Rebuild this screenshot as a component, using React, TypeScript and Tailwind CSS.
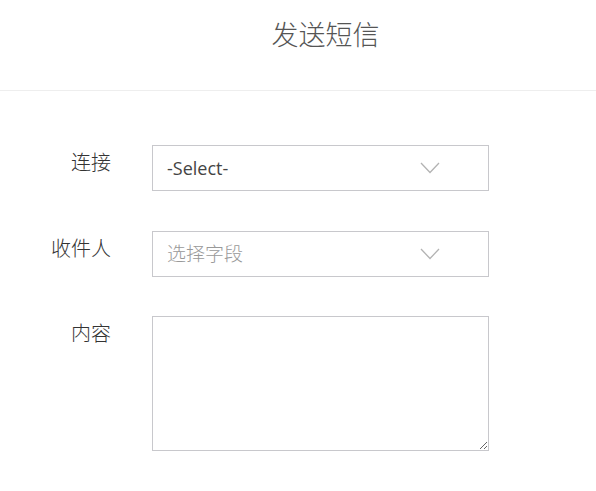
const base = { fontFamily: '"Lato", "Noto Sans CJK SC", sans-serif' };
const selectFont = { fontFamily: '"Open Sans", "Noto Sans CJK SC", sans-serif' };

function Chevron() {
  return (
    <svg width="20" height="12" viewBox="0 0 20 12" className="shrink-0">
      <path d="M1 1 L10 10.5 L19 1" fill="none" stroke="#b3b3b3" strokeWidth="1.3" />
    </svg>
  );
}

export default function App() {
  return (
    <div className="w-[596px] h-[491px] bg-white text-[#333]" style={base}>
      <div className="h-[91px] border-b border-[#eeeeee] flex items-center justify-center pl-[55px] pb-[20px]">
        <h1 className="text-[27px] font-light text-[#555]">发送短信</h1>
      </div>

      <div className="pt-[54px] flex flex-col">
        <div className="flex">
          <label className="w-[111px] text-right text-[20px] font-light pt-[2px]">连接</label>
          <div className="ml-[41px] w-[337px] h-[46px] border border-[#c8c8cc] flex items-center justify-between pl-[14px] pr-[48px]">
            <span className="text-[18px] text-[#444]" style={selectFont}>-Select-</span>
            <Chevron />
          </div>
        </div>

        <div className="flex mt-[40px]">
          <label className="w-[111px] text-right text-[20px] font-light pt-[2px]">收件人</label>
          <div className="ml-[41px] w-[337px] h-[46px] border border-[#c8c8cc] flex items-center justify-between pl-[14px] pr-[48px]">
            <span className="text-[19px] font-light text-[#999]">选择字段</span>
            <Chevron />
          </div>
        </div>

        <div className="flex mt-[39px]">
          <label className="w-[111px] text-right text-[20px] font-light pt-[2px]">内容</label>
          <textarea className="ml-[41px] w-[337px] h-[135px] border border-[#c8c8cc] outline-none" />
        </div>
      </div>
    </div>
  );
}
